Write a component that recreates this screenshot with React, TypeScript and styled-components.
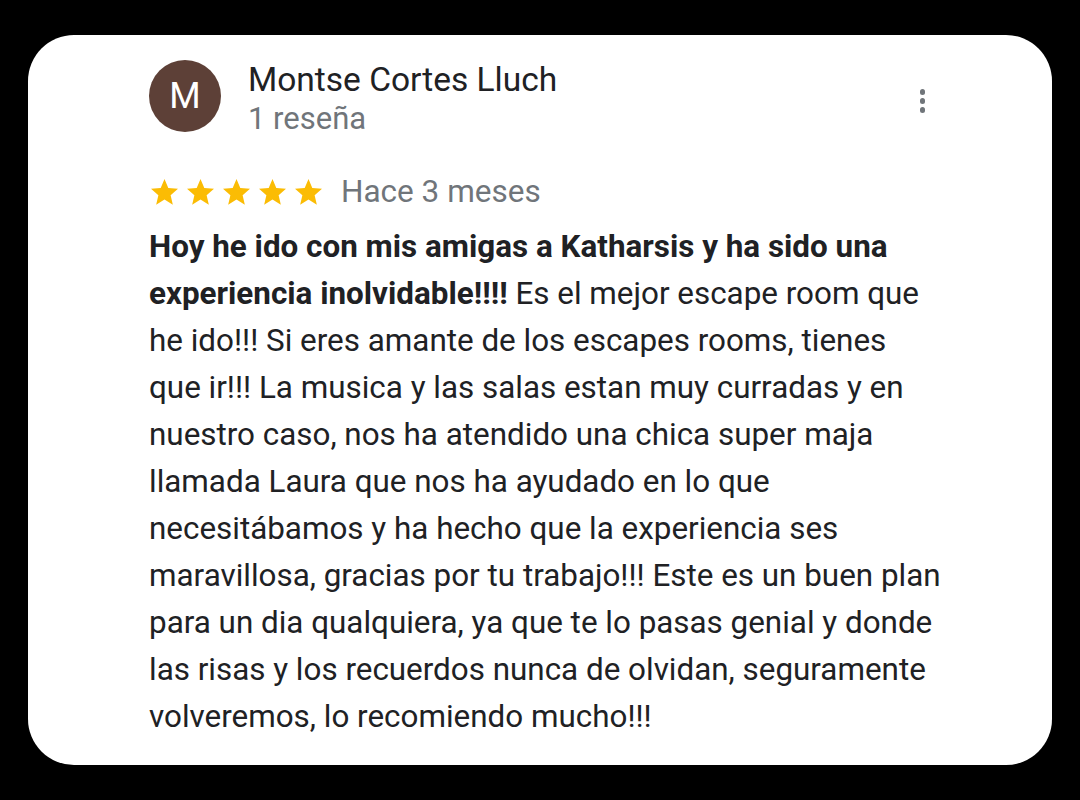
import React from "react";
import styled, { createGlobalStyle } from "styled-components";

const Global = createGlobalStyle`
  html, body { margin: 0; padding: 0; background: #000; }
  body { font-family: Roboto, "Noto Sans", "Liberation Sans", sans-serif; }
`;

const Page = styled.div`
  width: 1080px;
  height: 800px;
  padding: 35px 28px;
  box-sizing: border-box;
  background: #000;
`;

const Card = styled.div`
  background: #fff;
  border-radius: 46px;
  height: 730px;
  box-sizing: border-box;
  padding: 25px 120px 0 121px;
`;

const Header = styled.div`
  display: flex;
  align-items: flex-start;
  gap: 27px;
`;

const Avatar = styled.div`
  width: 72px;
  height: 72px;
  border-radius: 50%;
  background: #5d4037;
  color: #fff;
  display: flex;
  align-items: center;
  justify-content: center;
  font-size: 36px;
  font-weight: 400;
  flex-shrink: 0;
`;

const Who = styled.div`
  display: flex;
  flex-direction: column;
  flex: 1;
  padding-top: 1px;
`;

const Name = styled.div`
  font-size: 33.5px;
  line-height: 38px;
  color: #202124;
`;

const Sub = styled.div`
  margin-top: 1px;
  font-size: 31px;
  line-height: 38px;
  color: #70757a;
`;

const Menu = styled.div`
  display: flex;
  flex-direction: column;
  gap: 3.5px;
  padding-top: 29px;
  margin-right: 7px;
`;

const Dot = styled.span`
  width: 5.5px;
  height: 5.5px;
  border-radius: 50%;
  background: #70757a;
`;

const Rating = styled.div`
  display: flex;
  align-items: center;
  margin-top: 34px;
  height: 40px;
`;

const Stars = styled.div`
  display: flex;
  gap: 9px;
  margin-left: 2px;
`;

const When = styled.span`
  font-size: 31.5px;
  line-height: 40px;
  color: #70757a;
  margin-left: 19px;
`;

const Body = styled.p`
  margin: 11px 0 0;
  font-size: 31.4px;
  line-height: 47px;
  color: #202124;
  white-space: nowrap;
`;

const Strong = styled.b`
  font-weight: 700;
`;

const Star = () => (
  <svg width="27" height="25.65" viewBox="2 2 20 19">
    <path
      fill="#fbbc04"
      d="M12 17.27L18.18 21l-1.64-7.03L22 9.24l-7.19-.61L12 2 9.19 8.63 2 9.24l5.46 4.73L5.82 21z"
    />
  </svg>
);

const lines = [
  "he ido!!! Si eres amante de los escapes rooms, tienes",
  "que ir!!! La musica y las salas estan muy curradas y en",
  "nuestro caso, nos ha atendido una chica super maja",
  "llamada Laura que nos ha ayudado en lo que",
  "necesitábamos y ha hecho que la experiencia ses",
  "maravillosa, gracias por tu trabajo!!! Este es un buen plan",
  "para un dia qualquiera, ya que te lo pasas genial y donde",
  "las risas y los recuerdos nunca de olvidan, seguramente",
  "volveremos, lo recomiendo mucho!!!",
];

export default function App() {
  return (
    <>
      <Global />
      <Page>
        <Card>
          <Header>
            <Avatar>M</Avatar>
            <Who>
              <Name>Montse Cortes Lluch</Name>
              <Sub>1 reseña</Sub>
            </Who>
            <Menu>
              <Dot />
              <Dot />
              <Dot />
            </Menu>
          </Header>
          <Rating>
            <Stars>
              {[0, 1, 2, 3, 4].map((i) => (
                <Star key={i} />
              ))}
            </Stars>
            <When>Hace 3 meses</When>
          </Rating>
          <Body>
            <Strong>Hoy he ido con mis amigas a Katharsis y ha sido una</Strong>
            <br />
            <Strong>experiencia inolvidable!!!!</Strong> Es el mejor escape room
            que
            {lines.map((l, i) => (
              <React.Fragment key={i}>
                <br />
                {l}
              </React.Fragment>
            ))}
          </Body>
        </Card>
      </Page>
    </>
  );
}
